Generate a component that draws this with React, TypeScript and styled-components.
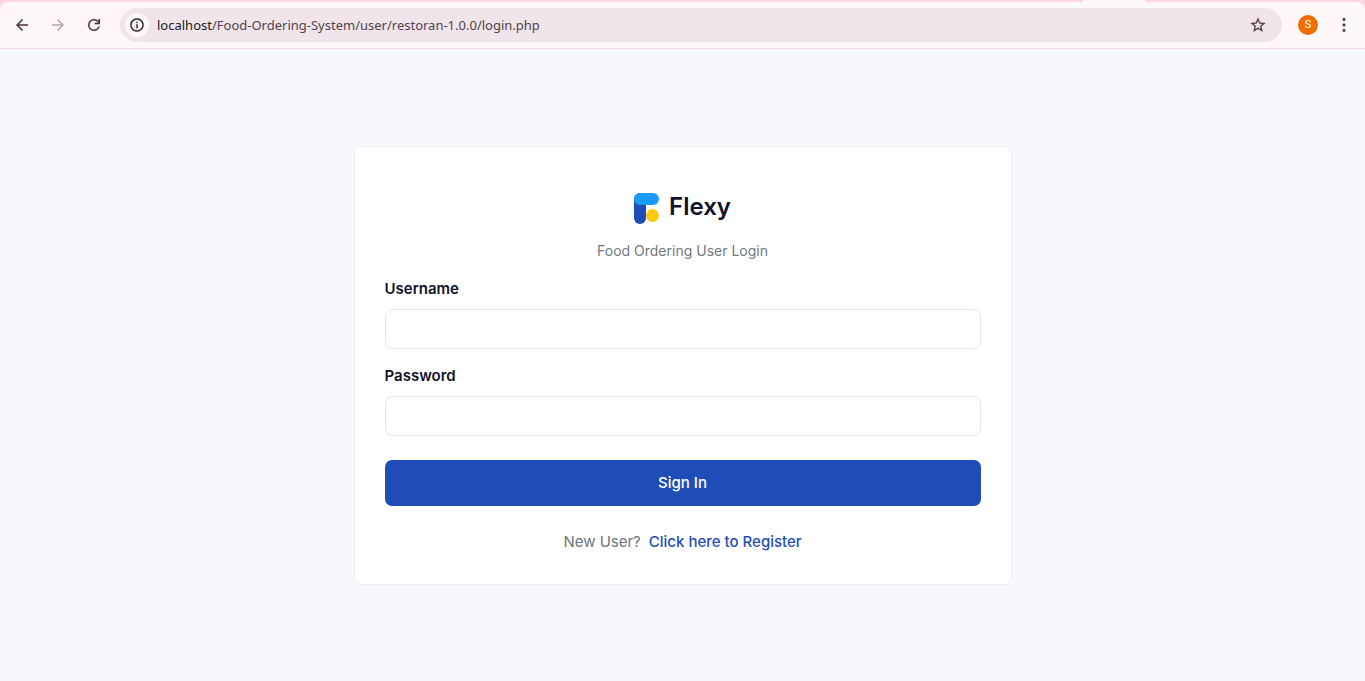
import React from "react";
import styled, { createGlobalStyle } from "styled-components";

const GlobalStyle = createGlobalStyle`
  *, *::before, *::after { box-sizing: border-box; }
  body {
    margin: 0;
    background: #f6f8fc;
    font-family: Inter, "Liberation Sans", sans-serif;
    color: #0f1229;
  }
`;

const Page = styled.div`
  min-height: 100vh;
  display: flex;
  flex-direction: column;
`;

const Browser = styled.header`
  background: #ffd6e2;
`;

const TabStrip = styled.div`
  height: 2px;
  display: flex;
  justify-content: flex-end;
  padding-right: 220px;
`;

const ActiveTab = styled.div`
  width: 62px;
  background: #fff8f8;
`;

const Toolbar = styled.div`
  display: flex;
  align-items: center;
  height: 47px;
  padding: 0 7px 0 8px;
  background: #fff8f8;
  border-bottom: 1px solid #f5dbe2;
  border-radius: 8px 8px 0 0;
`;

const Navigation = styled.nav`
  display: flex;
  gap: 8px;
  margin-right: 12px;
`;

const IconButton = styled.button`
  display: flex;
  align-items: center;
  justify-content: center;
  flex: none;
  width: 28px;
  height: 28px;
  padding: 0;
  border: 0;
  border-radius: 50%;
  background: transparent;
  color: #503a43;

  &:disabled { color: #b5a9ad; }
`;

const AddressBar = styled.div`
  flex: 1;
  min-width: 0;
  display: flex;
  align-items: center;
  height: 34px;
  padding: 0 10px 0 5px;
  border-radius: 17px;
  background: #f0e5eb;
`;

const SiteInfo = styled(IconButton)`
  width: 24px;
  height: 24px;
  background: #fff8f8;
  color: #2b2125;
`;

const Address = styled.div`
  flex: 1;
  min-width: 0;
  overflow: hidden;
  white-space: nowrap;
  margin-left: 8px;
  font: 13px/20px "Noto Sans", "Open Sans", sans-serif;
  color: #524349;
`;

const Host = styled.span`
  color: #1f1a1c;
`;

const Avatar = styled.button`
  width: 20px;
  height: 20px;
  margin: 0 12px 0 16px;
  padding: 0;
  border: 0;
  border-radius: 50%;
  background: #ef6c00;
  color: #fff;
  font: 11px/20px Roboto, sans-serif;
`;

const Main = styled.main`
  flex: 1;
  display: flex;
  align-items: center;
  justify-content: center;
`;

const Card = styled.section`
  width: 100%;
  max-width: 658px;
  padding: 30px;
  border: 1px solid #ebeef4;
  border-radius: 7px;
  background: #fff;
`;

const Brand = styled.a`
  display: flex;
  align-items: center;
  justify-content: center;
  gap: 10px;
  padding: 16px 0;
  color: #0f1229;
  font: 600 24px/31px Inter, sans-serif;
  text-decoration: none;
`;

const BrandName = styled.span`
  line-height: 28px;
  padding-bottom: 3px;
`;

const Tagline = styled.p`
  margin: 0 0 16px;
  font-size: 14px;
  line-height: 22px;
  text-align: center;
  color: #707a82;
`;

const Field = styled.div<{ $last?: boolean }>`
  margin-bottom: ${(p) => (p.$last ? 24 : 16)}px;
`;

const Label = styled.label`
  display: block;
  margin-bottom: 10px;
  font-size: 15px;
  font-weight: 600;
  line-height: 21px;
`;

const Input = styled.input`
  display: block;
  width: 100%;
  height: 40px;
  padding: 8px 16px;
  border: 1px solid #dfe5ef;
  border-radius: 7px;
  background: #fff;
  font: inherit;
  font-size: 15px;
`;

const Submit = styled.button`
  display: block;
  width: 100%;
  height: 46px;
  margin-bottom: 24px;
  padding: 0;
  border: 0;
  border-radius: 7px;
  background: #1f4db7;
  color: #fff;
  font: 500 15px/24px Inter, sans-serif;
`;

const Signup = styled.p`
  display: flex;
  align-items: center;
  justify-content: center;
  gap: 8px;
  margin: 0;
  font-size: 15px;
  line-height: 24px;
  color: #6c757d;
`;

const RegisterLink = styled.a`
  color: #1f4db7;
  font-weight: 500;
  text-decoration: none;
`;

const icons = {
  back: "M20 11H7.83l5.59-5.59L12 4l-8 8 8 8 1.41-1.41L7.83 13H20v-2z",
  forward: "M4 11h12.17l-5.59-5.59L12 4l8 8-8 8-1.41-1.41L16.17 13H4v-2z",
  reload:
    "M12 20q-3.35 0-5.675-2.325T4 12t2.325-5.675T12 4q1.725 0 3.3.713T18 6.75V4h2v7h-7V9h4.2q-.8-1.4-2.187-2.2T12 6Q9.5 6 7.75 7.75T6 12t1.75 4.25T12 18q1.925 0 3.475-1.1T17.65 14h2.1q-.7 2.65-2.85 4.325T12 20Z",
  info: "M11 17h2v-6h-2v6zm1-15C6.48 2 2 6.48 2 12s4.48 10 10 10 10-4.48 10-10S17.52 2 12 2zm0 18c-4.41 0-8-3.59-8-8s3.59-8 8-8 8 3.59 8 8-3.59 8-8 8zM11 9h2V7h-2v2z",
  star: "M22 9.24l-7.19-.62L12 2 9.19 8.63 2 9.24l5.46 4.73L5.82 21 12 17.27 18.18 21l-1.63-7.03L22 9.24zM12 15.4l-3.76 2.27 1-4.28-3.32-2.88 4.38-.38L12 6.1l1.71 4.04 4.38.38-3.32 2.88 1 4.28L12 15.4z",
  menu: "M10.4 6a1.6 1.6 0 1 0 3.2 0a1.6 1.6 0 1 0-3.2 0zM10.4 12a1.6 1.6 0 1 0 3.2 0a1.6 1.6 0 1 0-3.2 0zM10.4 18a1.6 1.6 0 1 0 3.2 0a1.6 1.6 0 1 0-3.2 0z",
};

function Icon({ name, size = 18 }: { name: keyof typeof icons; size?: number }) {
  return (
    <svg width={size} height={size} viewBox="0 0 24 24" fill="currentColor" stroke="currentColor" strokeWidth="0.2" aria-hidden="true">
      <path d={icons[name]} />
    </svg>
  );
}

function FlexyMark() {
  return (
    <svg width="25" height="31" viewBox="0 0 25 31" aria-hidden="true">
      <rect width="12" height="31" rx="6" fill="#1f4db7" />
      <rect width="25" height="12" rx="6" fill="#1a9bfc" />
      <circle cx="18.5" cy="22.5" r="6.5" fill="#fec90f" />
    </svg>
  );
}

export default function App() {
  return (
    <Page>
      <GlobalStyle />
      <Browser>
        <TabStrip>
          <ActiveTab />
        </TabStrip>
        <Toolbar>
          <Navigation aria-label="History">
            <IconButton aria-label="Back"><Icon name="back" /></IconButton>
            <IconButton aria-label="Forward" disabled><Icon name="forward" /></IconButton>
            <IconButton aria-label="Reload"><Icon name="reload" /></IconButton>
          </Navigation>
          <AddressBar>
            <SiteInfo aria-label="Site information"><Icon name="info" size={16} /></SiteInfo>
            <Address>
              <Host>localhost</Host>/Food-Ordering-System/user/restoran-1.0.0/login.php
            </Address>
            <IconButton aria-label="Bookmark this page"><Icon name="star" /></IconButton>
          </AddressBar>
          <Avatar aria-label="Profile">S</Avatar>
          <IconButton aria-label="Menu"><Icon name="menu" size={22} /></IconButton>
        </Toolbar>
      </Browser>
      <Main>
        <Card>
          <Brand href="#">
            <FlexyMark />
            <BrandName>Flexy</BrandName>
          </Brand>
          <Tagline>Food Ordering User Login</Tagline>
          <form onSubmit={(e) => e.preventDefault()}>
            <Field>
              <Label htmlFor="username">Username</Label>
              <Input id="username" type="text" />
            </Field>
            <Field $last>
              <Label htmlFor="password">Password</Label>
              <Input id="password" type="password" />
            </Field>
            <Submit type="submit">Sign In</Submit>
            <Signup>
              New User?
              <RegisterLink href="#register">Click here to Register</RegisterLink>
            </Signup>
          </form>
        </Card>
      </Main>
    </Page>
  );
}
